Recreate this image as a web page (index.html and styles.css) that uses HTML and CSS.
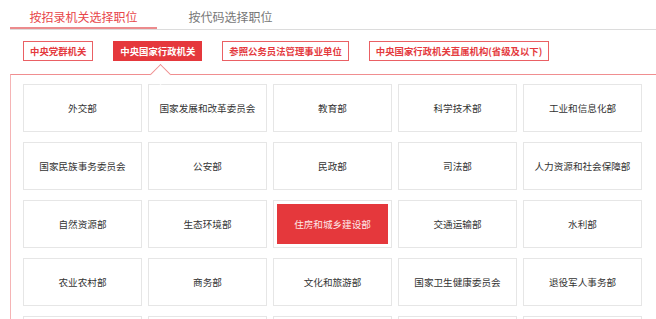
FILE: index.html
```html
<!DOCTYPE html>
<html>
	<head>
		<meta charset="utf-8">
		<link rel="stylesheet" href="styles.css">
	</head>
	<body>
		<div id="container">
			<div class="tabs">
				<div class="tab active">按招录机关选择职位</div>
				<div class="tab">按代码选择职位</div>
			</div>
			<div class="subTabs">
				<div class="subTab">中央党群机关</div>
				<div class="subTab active">中央国家行政机关</div>
				<div class="subTab">参照公务员法管理事业单位</div>
				<div class="subTab">中央国家行政机关直属机构(省级及以下)</div>
			</div>
			<div class="panel">
				<div class="notch"></div>
				<div class="grid">
					<div class="cell">外交部</div>
					<div class="cell">国家发展和改革委员会</div>
					<div class="cell">教育部</div>
					<div class="cell">科学技术部</div>
					<div class="cell">工业和信息化部</div>
					<div class="cell">国家民族事务委员会</div>
					<div class="cell">公安部</div>
					<div class="cell">民政部</div>
					<div class="cell">司法部</div>
					<div class="cell">人力资源和社会保障部</div>
					<div class="cell">自然资源部</div>
					<div class="cell">生态环境部</div>
					<div class="cell selected"><span>住房和城乡建设部</span></div>
					<div class="cell">交通运输部</div>
					<div class="cell">水利部</div>
					<div class="cell">农业农村部</div>
					<div class="cell">商务部</div>
					<div class="cell">文化和旅游部</div>
					<div class="cell">国家卫生健康委员会</div>
					<div class="cell">退役军人事务部</div>
					<div class="cell"></div>
					<div class="cell"></div>
					<div class="cell"></div>
					<div class="cell"></div>
					<div class="cell"></div>
				</div>
			</div>
		</div>
	</body>
</html>
```

FILE: styles.css
```css
body{
	margin:0;
	background:#fff;
	overflow:hidden;
	font-family:"Noto Sans CJK SC", "Microsoft YaHei", sans-serif;
	color:#333;
}

#container{
	width:700px;
}

.tabs{
	display:flex;
	margin-left:10px;
	border-bottom:1px solid #dcdcdc;
	height:29px;
}

.tab{
	width:147px;
	text-align:center;
	font-size:12px;
	line-height:16px;
	padding-top:9px;
	color:#777;
}

.tab.active{
	color:#e8464a;
	height:18px;
	border-bottom:2px solid #ec8b8d;
}

.subTabs{
	display:flex;
	gap:20px;
	margin:11px 0 0 23px;
}

.subTab{
	height:18px;
	line-height:18px;
	padding:0 6px;
	border:1px solid #ea6064;
	color:#e43a3e;
	font-size:9.4px;
	font-weight:bold;
}

.subTab.active{
	background-color:#e5383c;
	border-color:#e5383c;
	color:#fff;
}

.panel{
	position:relative;
	margin:13px 0 0 10px;
	border-top:1px solid #f08e90;
	border-left:1px solid #f5b4b5;
	padding:9px 0 0 12px;
}

.notch{
	position:absolute;
	top:-8px;
	left:142px;
	width:14px;
	height:14px;
	background:#fff;
	border-top:1px solid #f08e90;
	border-left:1px solid #f08e90;
	transform:rotate(45deg);
}

.grid{
	display:grid;
	grid-template-columns:repeat(5, 119px);
	grid-auto-rows:48px;
	gap:10px 6px;
}

.cell{
	border:1px solid #e6e6e6;
	display:flex;
	align-items:center;
	justify-content:center;
	font-size:9.6px;
	color:#333;
}

.cell.selected{
	padding:3px;
}

.cell.selected span{
	flex:1;
	align-self:stretch;
	display:flex;
	align-items:center;
	justify-content:center;
	background-color:#e5383c;
	color:#fde8e8;
}
```
